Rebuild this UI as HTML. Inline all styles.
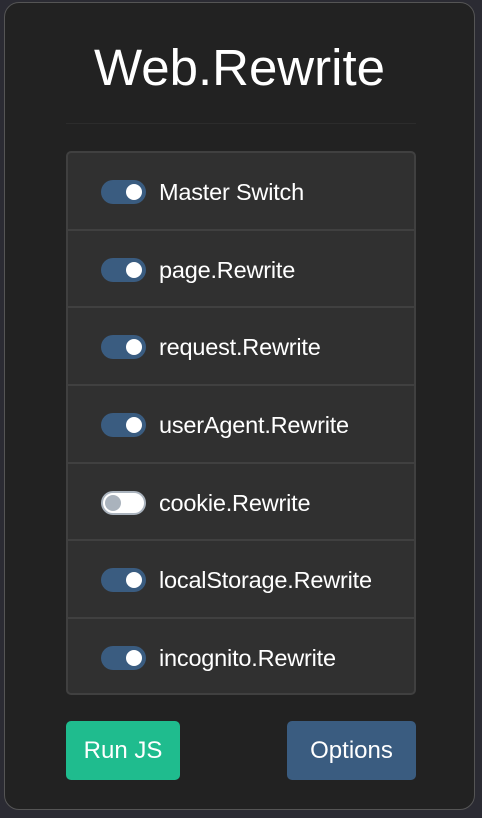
<!DOCTYPE html>
<html><head><style>
body{margin:0;width:482px;height:818px;background:#2b2b33;font-family:"Liberation Sans",sans-serif;overflow:hidden;position:relative}
.panel{position:absolute;left:4px;top:2px;width:471px;height:808px;background:#222;border:1px solid #555;border-radius:15px;box-sizing:border-box}
h1{position:absolute;left:0;right:0;top:35px;margin:0;text-align:center;color:#fff;font-weight:normal;font-size:51px;line-height:60px}
.sep{position:absolute;left:61px;top:120px;width:350px;height:1px;background:#2c2c2c}
.list{position:absolute;left:61px;top:148px;width:350px;height:544px;background:#303030;border:2px solid #404040;border-radius:5px;box-sizing:border-box;overflow:hidden}
.row{height:77.7px;border-bottom:2px solid #404040;box-sizing:border-box;position:relative}
.row:last-child{border-bottom:none}
.tg{position:absolute;left:33px;top:27px;width:45px;height:24px;border-radius:12px;background:#3a5c80}
.tg::after{content:"";position:absolute;right:4px;top:4px;width:16px;height:16px;border-radius:50%;background:#fff}
.tg.off{background:#fff;border:2px solid #aab3bd;box-sizing:border-box}
.tg.off::after{left:2px;right:auto;top:2px;background:#aab3bd}
.lb{position:absolute;left:91px;top:25px;color:#fff;font-size:23.5px;line-height:28px;letter-spacing:-0.2px}
.btn{position:absolute;top:718px;height:59px;border-radius:5px;color:#fff;font-size:24px;line-height:59px;text-align:center}
</style></head><body>
<div class="panel">
<h1>Web.Rewrite</h1>
<div class="sep"></div>
<div class="list">
<div class="row"><div class="tg"></div><div class="lb">Master Switch</div></div>
<div class="row"><div class="tg"></div><div class="lb">page.Rewrite</div></div>
<div class="row"><div class="tg"></div><div class="lb">request.Rewrite</div></div>
<div class="row"><div class="tg"></div><div class="lb">userAgent.Rewrite</div></div>
<div class="row"><div class="tg off"></div><div class="lb">cookie.Rewrite</div></div>
<div class="row"><div class="tg"></div><div class="lb">localStorage.Rewrite</div></div>
<div class="row"><div class="tg"></div><div class="lb">incognito.Rewrite</div></div>
</div>
<div class="btn" style="left:61px;width:114px;background:#1fbc8e">Run JS</div>
<div class="btn" style="left:282px;width:129px;background:#3a5c80">Options</div>
</div>
</body></html>
